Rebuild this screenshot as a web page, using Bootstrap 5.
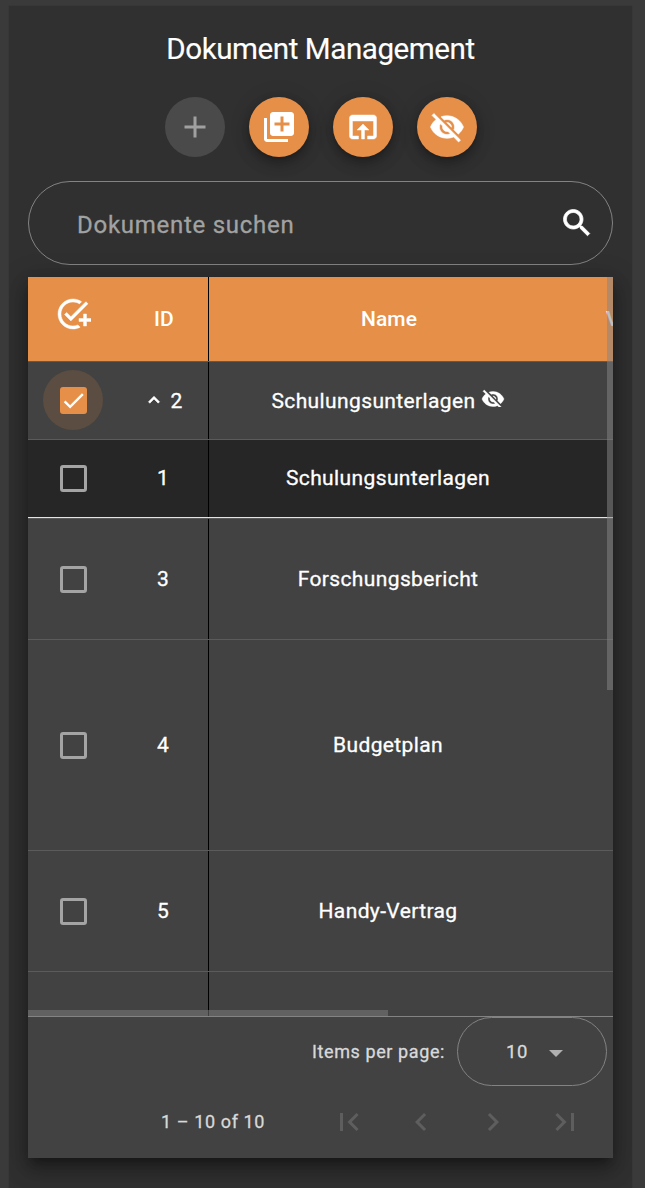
<!DOCTYPE html>
<html lang="de">
<head>
<meta charset="utf-8">
<meta name="viewport" content="width=device-width, initial-scale=1">
<title>Dokument Management</title>
<link rel="stylesheet" href="https://cdn.jsdelivr.net/npm/bootstrap@5.3.0/dist/css/bootstrap.min.css">
<style>
  body { background: #3a3a3a; font-family: Roboto, "Liberation Sans", sans-serif; color: #fff; height: 1188px; overflow: hidden; }
  svg { fill: currentColor; display: block; flex: none; }
  .shell { margin: 6px 13px 0 9px; padding: 0 19px; height: 1182px; background: #303030; box-shadow: 0 0 1px rgba(0,0,0,.25); overflow: hidden; }
  .page-title { font-size: 29.6px; line-height: 36px; margin: 25px 0 30px; font-weight: 400; letter-spacing: -.45px; -webkit-text-stroke: .15px; }
  .tools { gap: 24px; margin-bottom: 24px; }
  .fab { width: 60px; height: 60px; padding: 0; border: 0; border-radius: 50%; background: #e58f49; color: #fff; box-shadow: 0 4px 8px -2px rgba(0,0,0,.3), 0 8px 15px rgba(0,0,0,.16), 0 1px 22px rgba(0,0,0,.12); }
  .fab-off { background: #4a4a4a; color: #a0a0a0; box-shadow: none; }
  .search { height: 84px; border: 1px solid #838383; border-radius: 42px; padding: 0 17px 0 48px; margin-bottom: 12px; }
  .search input { background: none; border: 0; outline: 0; color: #fff; font-size: 24px; letter-spacing: .73px; padding: 4px 0 0; font-weight: 400; min-width: 0; }
  .search input::placeholder { color: #a2a2a2; opacity: 1; -webkit-text-stroke: .3px; }
  .search svg { stroke: currentColor; stroke-width: .5; }
  .panel { width: 585px; height: 881px; background: #424242; box-shadow: 0 8px 8px -5px rgba(0,0,0,.3), 0 12px 18px 2px rgba(0,0,0,.2), 0 5px 24px 4px rgba(0,0,0,.2); }
  .grid-view { height: 740px; overflow: hidden; border-bottom: 1px solid #838383; }
  .line { display: grid; grid-template-columns: 90px 91px 358px 115px; width: 654px; border-bottom: 1px solid #5b5b5b; font-size: 21px; font-weight: 400; letter-spacing: .38px; -webkit-text-stroke: .3px; }
  .line > div { display: flex; align-items: center; justify-content: center; }
  .line > div:nth-child(n+2) { padding-top: 2px; }
  .line > div:nth-child(2) { border-right: 1px solid #000; }
  .head { background: #e58f49; height: 85px; font-weight: 500; letter-spacing: .1px; -webkit-text-stroke: 0; }
  .head > div:nth-child(2), .head > div:nth-child(3) { padding-left: 2px; }
  .head > div:nth-child(4) { justify-content: flex-start; padding-left: 39px; }
  .head svg { margin-bottom: 10px; }
  .h-78 { height: 78px; }
  .h-121 { height: 121px; }
  .h-211 { height: 211px; }
  .dark { background: #262626; border-bottom-color: #e4e4e4; }
  .dark > div:nth-child(n+2) { padding-top: 0; }
  .seam { height: 1px; background: #5b5b5b; }
  .box { width: 27px; height: 27px; border: 3px solid #a4a4a4; border-radius: 3px; margin-left: 1px; }
  .halo { width: 60px; height: 60px; border-radius: 50%; background: #5b4d41; margin-bottom: 1px; }
  .box-on { border: 0; background: #e58f49; margin: 0; }
  .hidden-mark { margin: 0 0 9px 5px; }
  .sort-mark { margin: 0 5px 3px 0; }
  .bar-v { width: 6px; height: 413px; top: 0; right: 0; background: rgba(132,132,132,.52); }
  .bar-h { width: 360px; height: 6px; bottom: 0; left: 0; background: rgba(132,132,132,.48); }
  .foot { font-size: 18px; font-weight: 400; color: #d9d9d9; letter-spacing: .6px; -webkit-text-stroke: .3px; }
  .page-size { width: 150px; height: 69px; border: 1px solid #838383; border-radius: 35px; margin: 0 6px 0 12px; padding: 2px 43px 0 48px; font-size: 18.5px; }
  .tri { border: 7px solid transparent; border-top: 7.5px solid #b0b0b0; border-bottom: 0; margin-top: 2px; }
  .pager { height: 72px; color: #5e5e5e; padding-right: 12px; }
  .pager .range { color: #d9d9d9; margin: 0 48px 2px 0; }
  .step { width: 72px; display: flex; justify-content: center; }
</style>
</head>
<body>
<main class="shell">
  <h1 class="page-title text-center">Dokument Management</h1>

  <div class="tools d-flex justify-content-center">
    <button class="fab fab-off d-flex align-items-center justify-content-center" disabled aria-label="Neu">
      <svg width="36" height="36" viewBox="0 0 24 24"><path d="M19 13h-6v6h-2v-6H5v-2h6V5h2v6h6v2z"/></svg></button>
    <button class="fab d-flex align-items-center justify-content-center" aria-label="Mehrere hinzufügen">
      <svg width="36" height="36" viewBox="0 0 24 24"><path d="M4 6H2v14c0 1.100.9 2 2 2h14v-2H4V6zm16-4H8c-1.100 0-2 .9-2 2v12c0 1.100.9 2 2 2h12c1.100 0 2-.9 2-2V4c0-1.100-.9-2-2-2zm-1 9h-4v4h-2v-4H9V9h4V5h2v4h4v2z"/></svg></button>
    <button class="fab d-flex align-items-center justify-content-center" aria-label="Öffnen">
      <svg width="36" height="36" viewBox="0 0 24 24"><path d="M19 4H5c-1.110 0-2 .9-2 2v12c0 1.100.89 2 2 2h4v-2H5V8h14v10h-4v2h4c1.100 0 2-.9 2-2V6c0-1.100-.89-2-2-2zm-7 6l-4 4h3v6h2v-6h3l-4-4z" stroke="currentColor" stroke-width=".3"/></svg></button>
    <button class="fab d-flex align-items-center justify-content-center" aria-label="Ausblenden">
      <svg width="36" height="36" viewBox="0 0 24 24"><path id="eye-off" stroke="currentColor" stroke-width=".4" d="M12 7c2.760 0 5 2.240 5 5 0 .65-.13 1.260-.36 1.830l2.920 2.920c1.510-1.260 2.700-2.890 3.430-4.750-1.730-4.390-6-7.500-11-7.500-1.400 0-2.740.25-3.980.7l2.160 2.160C10.740 7.130 11.350 7 12 7zM2 4.270l2.280 2.280.46.46C3.080 8.300 1.780 10.020 1 12c1.730 4.390 6 7.500 11 7.500 1.550 0 3.030-.3 4.380-.84l.42.42L19.730 22 21 20.730 3.270 3 2 4.270zM7.530 9.800l1.550 1.550c-.05.21-.08.43-.08.65 0 1.660 1.340 3 3 3 .22 0 .44-.03.65-.08l1.550 1.550c-.67.33-1.410.53-2.200.53-2.760 0-5-2.240-5-5 0-.79.2-1.530.53-2.200zm4.310-.78l3.150 3.150.02-.16c0-1.660-1.340-3-3-3l-.17.01z"/></svg></button>
  </div>

  <div class="search d-flex align-items-center">
    <input class="flex-grow-1" type="text" placeholder="Dokumente suchen" aria-label="Dokumente suchen">
    <svg width="36" height="36" viewBox="0 0 24 24"><path d="M15.500 14h-.79l-.28-.27C15.410 12.590 16 11.110 16 9.500 16 5.910 13.090 3 9.500 3S3 5.910 3 9.500 5.910 16 9.500 16c1.610 0 3.090-.59 4.230-1.570l.27.28v.79l5 4.990L20.490 19l-4.990-5zm-6 0C7.010 14 5 11.990 5 9.500S7.010 5 9.500 5 14 7.010 14 9.500 11.990 14 9.500 14z"/></svg>
  </div>

  <section class="panel">
    <div class="grid-view position-relative">
      <div class="line head">
        <div><svg width="36" height="36" viewBox="0 0 24 24"><path stroke="currentColor" stroke-width=".3" d="M22 5.180L10.590 16.600l-4.240-4.240 1.410-1.410 2.830 2.830 10-10L22 5.180zM12 20c-4.410 0-8-3.590-8-8s3.590-8 8-8c1.570 0 3.040.46 4.280 1.250l1.450-1.450C16.100 2.670 14.130 2 12 2 6.480 2 2 6.480 2 12s4.480 10 10 10c1.730 0 3.360-.44 4.780-1.220l-1.500-1.500c-1 .46-2.110.72-3.280.72zm7-5h-3v2h3v3h2v-3h3v-2h-3v-3h-2v3z"/></svg></div>
        <div>ID</div><div>Name</div><div>V</div>
      </div>
      <div class="line h-78">
        <div><span class="halo d-flex align-items-center justify-content-center"><span class="box box-on"><svg width="27" height="27" viewBox="0 0 24 24"><path d="M4.100 12.700L9 17.600 20.300 6.300" fill="none" stroke="#fff" stroke-width="2.130"/></svg></span></span></div>
        <div><svg class="sort-mark" width="22" height="22" viewBox="0 0 24 24"><path stroke="currentColor" stroke-width=".7" d="M12 8l-6 6 1.410 1.410L12 10.830l4.590 4.580L18 14z"/></svg>2</div>
        <div>Schulungsunterlagen<svg class="hidden-mark" width="24" height="20" viewBox="0 0 24 20"><use href="#eye-off"/></svg></div><div></div>
      </div>
      <div class="line h-78 dark"><div><span class="box"></span></div><div>1</div><div>Schulungsunterlagen</div><div></div></div>
      <div class="seam"></div>
      <div class="line h-121"><div><span class="box"></span></div><div>3</div><div>Forschungsbericht</div><div></div></div>
      <div class="line h-211"><div><span class="box"></span></div><div>4</div><div>Budgetplan</div><div></div></div>
      <div class="line h-121"><div><span class="box"></span></div><div>5</div><div>Handy-Vertrag</div><div></div></div>
      <div class="line h-121"><div></div><div></div><div></div><div></div></div>
      <div class="bar-v position-absolute"></div>
      <div class="bar-h position-absolute"></div>
    </div>

    <footer class="foot">
      <div class="d-flex align-items-center justify-content-end">
        <span>Items per page:</span>
        <div class="page-size d-flex align-items-center justify-content-between"><span>10</span><span class="tri"></span></div>
      </div>
      <div class="pager d-flex align-items-center justify-content-end">
        <span class="range">1 – 10 of 10</span>
        <span class="step"><svg width="36" height="36" viewBox="0 0 24 24"><path d="M18.410 16.590L13.820 12l4.590-4.590L17 6l-6 6 6 6zM6 6h2v12H6z"/></svg></span>
        <span class="step"><svg width="36" height="36" viewBox="0 0 24 24"><path d="M15.410 7.410L14 6l-6 6 6 6 1.410-1.410L10.830 12z"/></svg></span>
        <span class="step"><svg width="36" height="36" viewBox="0 0 24 24"><path d="M10 6L8.590 7.410 13.170 12l-4.580 4.590L10 18l6-6z"/></svg></span>
        <span class="step"><svg width="36" height="36" viewBox="0 0 24 24"><path d="M5.590 7.410L10.180 12l-4.590 4.590L7 18l6-6-6-6zM16 6h2v12h-2z"/></svg></span>
      </div>
    </footer>
  </section>
</main>
<script src="https://cdn.jsdelivr.net/npm/bootstrap@5.3.0/dist/js/bootstrap.bundle.min.js"></script>
</body>
</html>
